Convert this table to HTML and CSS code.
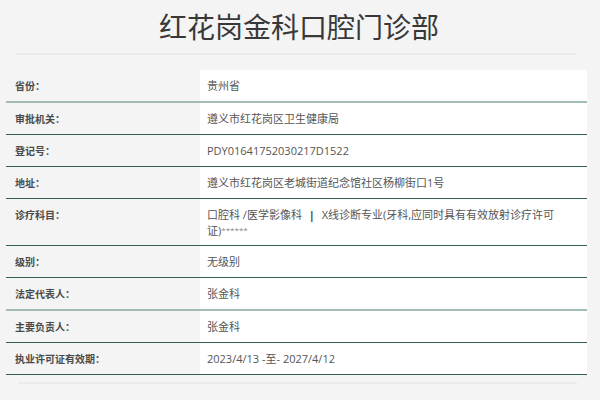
FILE: index.html
```html
<!DOCTYPE html>
<html lang="zh-CN">
<head>
<meta charset="utf-8">
<title>红花岗金科口腔门诊部</title>
<link rel="stylesheet" href="styles.css">
</head>
<body>
<div class="page">
  <h1 class="title">红花岗金科口腔门诊部</h1>
  <div class="divider top"></div>
  <div class="info">
    <div class="row light"><div class="label">省份：</div><div class="value">贵州省</div></div>
    <div class="row"><div class="label">审批机关：</div><div class="value">遵义市红花岗区卫生健康局</div></div>
    <div class="row"><div class="label">登记号：</div><div class="value">PDY01641752030217D1522</div></div>
    <div class="row"><div class="label">地址：</div><div class="value">遵义市红花岗区老城街道纪念馆社区杨柳街口1号</div></div>
    <div class="row"><div class="label">诊疗科目：</div><div class="value wrap">口腔科 /医学影像科 <b class="sep">|</b> <span>X线诊断专业(牙科,应同时具有有效放射诊疗许可</span><span>证)</span><span class="stars">******</span></div></div>
    <div class="row"><div class="label">级别：</div><div class="value">无级别</div></div>
    <div class="row light"><div class="label">法定代表人：</div><div class="value">张金科</div></div>
    <div class="row"><div class="label">主要负责人：</div><div class="value">张金科</div></div>
    <div class="row"><div class="label">执业许可证有效期：</div><div class="value">2023/4/13 -至- 2027/4/12</div></div>
  </div>
  <div class="divider bottom"></div>
</div>
</body>
</html>
```
FILE: styles.css
```css
html, body {
  margin: 0;
  padding: 0;
  background: #f4f4f4;
}
body {
  font-family: "Open Sans", "Noto Sans CJK SC", sans-serif;
  color: #333;
}
.page {
  padding-top: 8px;
}
.title {
  margin: 0;
  text-align: center;
  font-family: "Noto Sans CJK SC", sans-serif;
  font-weight: 400;
  font-size: 28px;
  line-height: 36px;
  color: #383838;
  padding-right: 2px;
}
.divider {
  height: 2px;
  background: #ebebeb;
}
.divider.top {
  margin: 9px 23px 15px 15px;
}
.divider.bottom {
  margin: 7px 23px 0 18px;
}
.info {
  margin: 0 13px 0 6px;
}
.row {
  display: grid;
  grid-template-columns: 194px 1fr;
  border-bottom: 1px solid #33604f;
}
.row.light {
  border-bottom: 2px solid #a2bdb1;
}
.label {
  padding: 9px 0 9px 9px;
  font-family: "Noto Sans CJK SC", sans-serif;
  font-size: 10px;
  line-height: 13px;
  font-weight: 700;
  color: #4a4a4a;
}
.value {
  background: #fff;
  padding: 9px 32px 9px 7px;
  font-size: 11px;
  line-height: 13px;
  color: #555;
}
.value.wrap {
  line-height: 15px;
  padding-top: 8px;
  padding-bottom: 7px;
}
.row.light .value {
  padding-bottom: 8px;
}
.sep {
  font-weight: 700;
  color: #444;
  margin: 0 4px;
}
.stars {
  font-size: 8px;
  color: #888;
  vertical-align: 2px;
}
```
